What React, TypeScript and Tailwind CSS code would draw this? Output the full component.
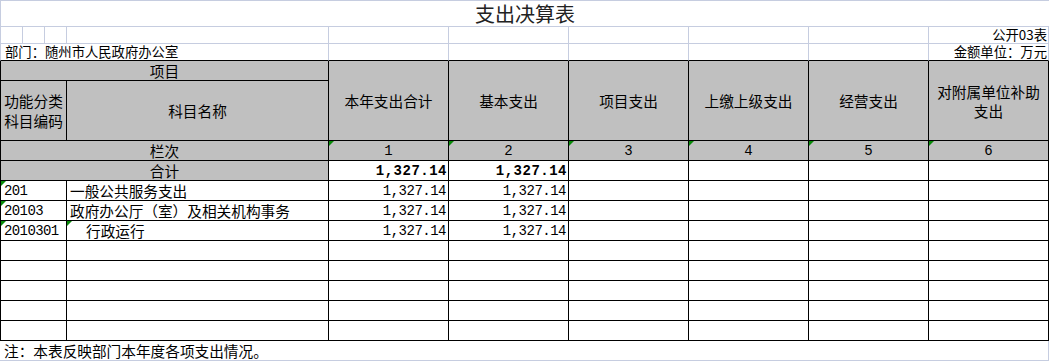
const G = "border-[#c6cde0]";
const B = "border-black";
const GRAY = "bg-[#c0c0c0]";
const MONO = "font-['Liberation_Mono',monospace]";

function Tri() {
  return (
    <span className="absolute left-0 top-0 h-0 w-0 border-t-[5px] border-r-[5px] border-t-[#0a8a0a] border-r-transparent" />
  );
}

const rows = [
  { code: "201", name: "一般公共服务支出", a: "1,327.14", b: "1,327.14" },
  { code: "20103", name: "政府办公厅（室）及相关机构事务", a: "1,327.14", b: "1,327.14" },
  { code: "2010301", name: "行政运行", a: "1,327.14", b: "1,327.14", indent: true },
  { code: "", name: "", a: "", b: "" },
  { code: "", name: "", a: "", b: "" },
  { code: "", name: "", a: "", b: "" },
  { code: "", name: "", a: "", b: "" },
  { code: "", name: "", a: "", b: "" },
];

const heads = ["本年支出合计", "基本支出", "项目支出", "上缴上级支出", "经营支出", "对附属单位补助支出"];

export default function App() {
  return (
    <div className="w-[1049px] h-[361px] bg-white text-black font-['Noto_Sans_CJK_SC','Liberation_Sans',sans-serif] overflow-hidden">
      <div className="grid grid-cols-[23px_22px_22px_262px_120px_120px_120px_120px_120px_120px] grid-rows-[27px_17px_17px_20px_60px_20px_20px_20px_20px_20px_20px_20px_20px_20px_20px_20px]">
        {/* title */}
        <div className={`col-span-10 border-t border-l border-b ${G} flex items-end justify-center pb-[1px] text-[20px] leading-[22px] text-[#222]`}>
          支出决算表
        </div>

        {/* row 2 */}
        <div className={`border-l border-r border-b ${G}`} />
        <div className={`border-r border-b ${G}`} />
        <div className={`border-r border-b ${G}`} />
        <div className={`border-r border-b ${G}`} />
        <div className={`border-r border-b ${G}`} />
        <div className={`border-r border-b ${G}`} />
        <div className={`border-r border-b ${G}`} />
        <div className={`border-r border-b ${G}`} />
        <div className={`border-r border-b ${G}`} />
        <div className={`border-r border-b ${G} flex items-center justify-end pr-[1px] text-[13.33px] leading-[14px]`}>
          公开03表
        </div>

        {/* row 3 */}
        <div className={`col-span-4 border-l ${G} border-r border-b border-b-black flex items-center pl-[4px] text-[13.33px] leading-[14px] whitespace-nowrap`}>
          部门：随州市人民政府办公室
        </div>
        <div className={`border-r ${G} border-b border-b-black`} />
        <div className={`border-r ${G} border-b border-b-black`} />
        <div className={`border-r ${G} border-b border-b-black`} />
        <div className={`border-r ${G} border-b border-b-black`} />
        <div className={`border-r ${G} border-b border-b-black`} />
        <div className={`border-r ${G} border-b border-b-black flex items-center justify-end pr-[1px] text-[13.33px] leading-[14px] whitespace-nowrap`}>
          金额单位：万元
        </div>

        {/* header */}
        <div className={`col-span-4 border-l border-r border-b ${B} ${GRAY} flex items-center justify-center text-[14.67px] leading-[18px]`}>
          项目
        </div>
        {heads.map((h) => (
          <div
            key={h}
            className={`row-span-2 border-r border-b ${B} ${GRAY} flex items-center justify-center text-center px-[8px] text-[14.67px] leading-[19px]`}
          >
            {h}
          </div>
        ))}
        <div className={`col-span-3 border-l border-r border-b ${B} ${GRAY} flex items-center justify-center text-center text-[14.67px] leading-[20px]`}>
          功能分类<br />科目编码
        </div>
        <div className={`border-r border-b ${B} ${GRAY} flex items-center justify-center text-[14.67px] leading-[18px]`}>
          科目名称
        </div>

        {/* 栏次 */}
        <div className={`col-span-4 border-l border-r border-b ${B} ${GRAY} flex items-center justify-center text-[14.67px] leading-[18px]`}>
          栏次
        </div>
        {[1, 2, 3, 4, 5, 6].map((n) => (
          <div
            key={n}
            className={`relative border-r border-b ${B} ${GRAY} flex items-end justify-center pb-[1px] ${MONO} text-[14px] leading-[16px]`}
          >
            <Tri />
            {n}
          </div>
        ))}

        {/* 合计 */}
        <div className={`col-span-4 border-l border-r border-b ${B} ${GRAY} flex items-center justify-center text-[14.67px] leading-[18px]`}>
          合计
        </div>
        <div className={`border-r border-b ${B} flex items-end justify-end pr-[1px] pb-[1px] ${MONO} font-bold tracking-[0.5px] text-[14px] leading-[16px]`}>
          1,327.14
        </div>
        <div className={`border-r border-b ${B} flex items-end justify-end pr-[1px] pb-[1px] ${MONO} font-bold tracking-[0.5px] text-[14px] leading-[16px]`}>
          1,327.14
        </div>
        <div className={`border-r border-b ${B}`} />
        <div className={`border-r border-b ${B}`} />
        <div className={`border-r border-b ${B}`} />
        <div className={`border-r border-b ${B}`} />

        {/* data rows */}
        {rows.map((r, i) => (
          <div key={i} className="contents">
            <div className={`relative col-span-3 border-l border-r border-b ${B} flex items-end pl-[3px] pb-[1px] ${MONO} tracking-[-0.6px] text-[14px] leading-[16px]`}>
              {r.code && <Tri />}
              {r.code}
            </div>
            <div
              className={`relative border-r border-b ${B} flex items-end pb-[1px] text-[14.67px] leading-[17px] whitespace-nowrap ${r.indent ? "pl-[19px]" : "pl-[3px]"}`}
            >
              {r.indent && <Tri />}
              {r.name}
            </div>
            <div className={`border-r border-b ${B} flex items-end justify-end pr-[2px] pb-[1px] ${MONO} tracking-[-0.5px] text-[14px] leading-[16px]`}>
              {r.a}
            </div>
            <div className={`border-r border-b ${B} flex items-end justify-end pr-[2px] pb-[1px] ${MONO} tracking-[-0.5px] text-[14px] leading-[16px]`}>
              {r.b}
            </div>
            <div className={`border-r border-b ${B}`} />
            <div className={`border-r border-b ${B}`} />
            <div className={`border-r border-b ${B}`} />
            <div className={`border-r border-b ${B}`} />
          </div>
        ))}

        {/* footer */}
        <div className={`col-span-10 border-r border-b ${G} flex items-end pl-[4px] pb-[1px] text-[14.67px] leading-[17px] whitespace-nowrap`}>
          注：本表反映部门本年度各项支出情况。
        </div>
      </div>
    </div>
  );
}
